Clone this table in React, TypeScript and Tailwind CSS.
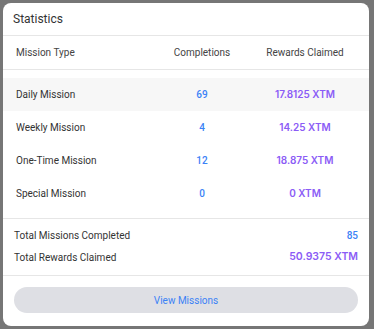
import React from "react";

type MissionStat = {
  type: string;
  completions: number;
  rewards: string;
};

const stats: MissionStat[] = [
  { type: "Daily Mission", completions: 69, rewards: "17.8125 XTM" },
  { type: "Weekly Mission", completions: 4, rewards: "14.25 XTM" },
  { type: "One-Time Mission", completions: 12, rewards: "18.875 XTM" },
  { type: "Special Mission", completions: 0, rewards: "0 XTM" },
];

const rowGrid = "grid grid-cols-[134px_104px_1fr] items-center px-[13px]";

export default function App() {
  return (
    <div className="min-h-[329px] bg-[#767676] p-[3px] pr-[5px] font-['Roboto',sans-serif]">
      <div className="overflow-hidden rounded-lg bg-white">
        {/* Title */}
        <div className="flex h-[33px] items-center border-b border-[#e6e6e6] px-[10px]">
          <h2 className="text-[12px] text-[#333]">Statistics</h2>
        </div>

        {/* Table header */}
        <div className={`${rowGrid} h-[34px] border-b border-[#e6e6e6] text-[10px] text-[#444]`}>
          <span>Mission Type</span>
          <span className="text-center">Completions</span>
          <span className="text-center">Rewards Claimed</span>
        </div>

        {/* Rows */}
        <div className="border-b border-[#e6e6e6] py-2">
          {stats.map((s, i) => (
            <div
              key={s.type}
              className={`${rowGrid} h-[33px] text-[10px] ${i === 0 ? "bg-[#f7f7f7]" : ""}`}
            >
              <span className="text-[#333]">{s.type}</span>
              <span className="text-center font-medium text-[#3b82f6]">{s.completions}</span>
              <span className="text-center font-['Inter',sans-serif] font-semibold text-[#8b5cf6]">
                {s.rewards}
              </span>
            </div>
          ))}
        </div>

        {/* Totals */}
        <div className="border-b border-[#e6e6e6] px-[11px] pt-[5px] pb-[7px] text-[10px]">
          <div className="flex h-[22px] items-center justify-between">
            <span className="text-[#333]">Total Missions Completed</span>
            <span className="font-medium text-[#3b82f6]">85</span>
          </div>
          <div className="flex h-[22px] items-center justify-between">
            <span className="text-[#333]">Total Rewards Claimed</span>
            <span className="font-['Inter',sans-serif] text-[10.5px] font-semibold text-[#8b5cf6]">
              50.9375 XTM
            </span>
          </div>
        </div>

        {/* Footer */}
        <div className="px-[11px] pt-[11px] pb-[13px]">
          <button className="flex h-[26px] w-full items-center justify-center rounded-full bg-[#dedfe4] text-[10px] text-[#3b82f6]">
            View Missions
          </button>
        </div>
      </div>
    </div>
  );
}
